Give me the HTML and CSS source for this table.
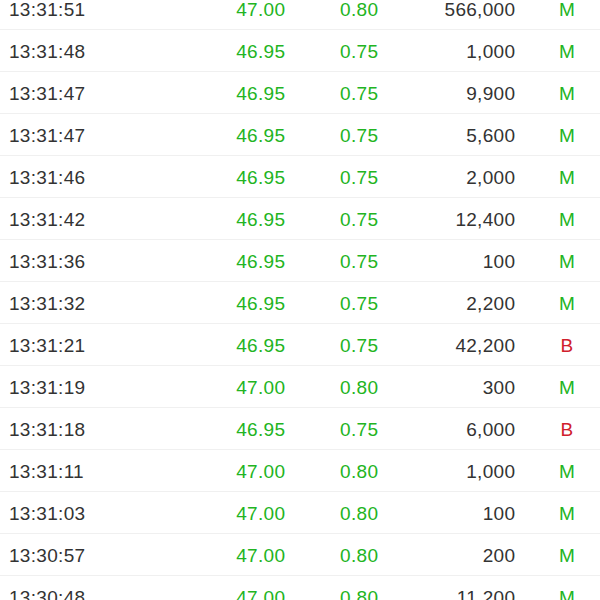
FILE: index.html
```html
<!DOCTYPE html>
<html>
<head>
<meta charset="utf-8">
<link rel="stylesheet" href="styles.css">
</head>
<body>
<div class="list">
  <div class="row"><span class="time">13:31:51</span><span class="price">47.00</span><span class="chg">0.80</span><span class="vol">566,000</span><span class="type m">M</span></div>
  <div class="row"><span class="time">13:31:48</span><span class="price">46.95</span><span class="chg">0.75</span><span class="vol">1,000</span><span class="type m">M</span></div>
  <div class="row"><span class="time">13:31:47</span><span class="price">46.95</span><span class="chg">0.75</span><span class="vol">9,900</span><span class="type m">M</span></div>
  <div class="row"><span class="time">13:31:47</span><span class="price">46.95</span><span class="chg">0.75</span><span class="vol">5,600</span><span class="type m">M</span></div>
  <div class="row"><span class="time">13:31:46</span><span class="price">46.95</span><span class="chg">0.75</span><span class="vol">2,000</span><span class="type m">M</span></div>
  <div class="row"><span class="time">13:31:42</span><span class="price">46.95</span><span class="chg">0.75</span><span class="vol">12,400</span><span class="type m">M</span></div>
  <div class="row"><span class="time">13:31:36</span><span class="price">46.95</span><span class="chg">0.75</span><span class="vol">100</span><span class="type m">M</span></div>
  <div class="row"><span class="time">13:31:32</span><span class="price">46.95</span><span class="chg">0.75</span><span class="vol">2,200</span><span class="type m">M</span></div>
  <div class="row"><span class="time">13:31:21</span><span class="price">46.95</span><span class="chg">0.75</span><span class="vol">42,200</span><span class="type b">B</span></div>
  <div class="row"><span class="time">13:31:19</span><span class="price">47.00</span><span class="chg">0.80</span><span class="vol">300</span><span class="type m">M</span></div>
  <div class="row"><span class="time">13:31:18</span><span class="price">46.95</span><span class="chg">0.75</span><span class="vol">6,000</span><span class="type b">B</span></div>
  <div class="row"><span class="time">13:31:11</span><span class="price">47.00</span><span class="chg">0.80</span><span class="vol">1,000</span><span class="type m">M</span></div>
  <div class="row"><span class="time">13:31:03</span><span class="price">47.00</span><span class="chg">0.80</span><span class="vol">100</span><span class="type m">M</span></div>
  <div class="row"><span class="time">13:30:57</span><span class="price">47.00</span><span class="chg">0.80</span><span class="vol">200</span><span class="type m">M</span></div>
  <div class="row"><span class="time">13:30:48</span><span class="price">47.00</span><span class="chg">0.80</span><span class="vol">11,200</span><span class="type m">M</span></div>
</div>
</body>
</html>
```
FILE: styles.css
```css
html, body {
  margin: 0;
  padding: 0;
  background: #ffffff;
  overflow: hidden;
}
body {
  font-family: "Liberation Sans", Arial, sans-serif;
  font-size: 19px;
  letter-spacing: 0.3px;
  color: #333333;
}
.list {
  margin-top: -12px;
}
.row {
  display: grid;
  grid-template-columns: 176px 100px 93px 137px 1fr;
  box-sizing: border-box;
  height: 42px;
  padding: 3px 0 0 9px;
  line-height: 38px;
  border-bottom: 1px solid #f0f0f0;
}
.price, .chg, .vol {
  text-align: right;
  margin-right: -0.3px;
}
.price, .chg {
  color: #22b422;
}
.type {
  text-align: center;
  padding-left: 19px;
}
.type.m { color: #22b422; }
.type.b { color: #d0202c; }
```
